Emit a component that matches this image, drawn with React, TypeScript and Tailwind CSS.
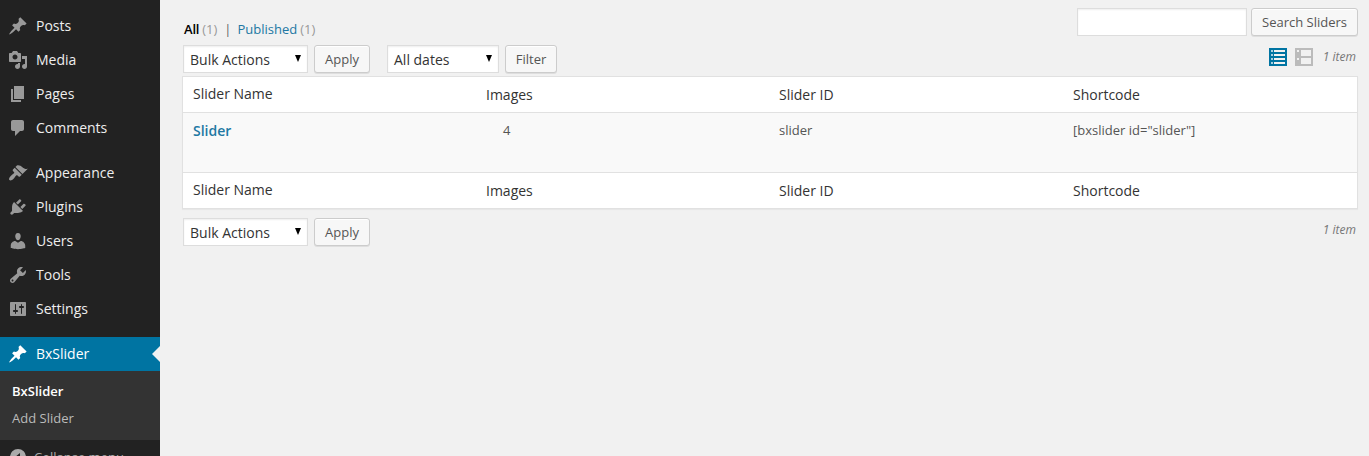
import React from "react";

const icons = {
  pin: "M10.44 3.02l1.82-1.82 6.36 6.35-1.83 1.82c-1.05-.68-2.48-.57-3.41.36l-.75.75c-.92.93-1.04 2.35-.35 3.41l-1.83 1.82-2.41-2.41-2.8 2.79c-.42.42-3.38 2.71-3.8 2.29s1.86-3.39 2.28-3.81l2.79-2.79L4.1 9.36l1.83-1.82c1.05.69 2.48.57 3.4-.36l.75-.75c.93-.92 1.05-2.35.36-3.41z",
  media: "M13 11V4c0-.55-.45-1-1-1h-1.67L9 1H5L3.67 3H2c-.55 0-1 .45-1 1v7c0 .55.45 1 1 1h10c.55 0 1-.45 1-1zM7 4.5c1.38 0 2.5 1.12 2.5 2.5S8.38 9.5 7 9.5 4.5 8.38 4.5 7 5.62 4.5 7 4.5zM14 6h5v10.5c0 1.38-1.12 2.5-2.5 2.5S14 17.88 14 16.5s1.12-2.5 2.5-2.5c.17 0 .34.02.5.05V9h-3V6zm-4 8.05V13h2v3.5c0 1.38-1.12 2.5-2.5 2.5S7 17.88 7 16.5 8.12 14 9.5 14c.17 0 .34.02.5.05z",
  page: "M6 15V2h10v13H6zm-1 1h8v2H3V5h2v11z",
  comment: "M5 2h9c1.1 0 2 .9 2 2v7c0 1.1-.9 2-2 2h-2l-5 5v-5H5c-1.1 0-2-.9-2-2V4c0-1.1.9-2 2-2z",
  brush: "M14.48 11.06L7.41 3.99l1.5-1.5c.5-.56 2.3-.47 3.51.32 1.21.8 1.43 1.28 2.91 2.1 1.18.64 2.45 1.26 4.45.85zm-.71.71L6.7 4.7 4.93 6.47c-.39.39-.39 1.02 0 1.41l1.06 1.06c.39.39.39 1.03 0 1.42-.6.6-1.43 1.11-2.21 1.69-.35.26-.7.53-1.01.84C1.43 14.23.4 16.08 1.4 17.07c.99 1 2.84-.03 4.18-1.36.31-.31.58-.66.85-1.02.57-.78 1.08-1.61 1.69-2.21.39-.39 1.02-.39 1.41 0l1.06 1.06c.39.39 1.02.39 1.41 0z",
  plug: "M13.11 4.36L9.87 7.6 8 5.73l3.24-3.24c.35-.34 1.05-.2 1.56.32.52.51.66 1.21.31 1.55zm-8 1.77l.91-1.12 9.01 9.01-1.19.84c-.71.71-2.63 1.16-3.82 1.16H6.14L4.9 17.26c-.59.59-1.54.59-2.12 0-.59-.58-.59-1.53 0-2.12l1.24-1.24v-3.88c0-1.13.4-3.19 1.09-3.89zm7.26 3.97l3.24-3.24c.34-.35 1.04-.21 1.55.31.52.51.66 1.21.31 1.55l-3.24 3.25z",
  user: "M10 9.25c-2.27 0-2.73-3.44-2.73-3.44C7 4.02 7.82 2 9.97 2c2.16 0 2.98 2.02 2.71 3.81 0 0-.41 3.44-2.68 3.44zm0 2.57L12.72 10c2.39 0 4.52 2.33 4.52 4.53v2.49s-3.65 1.13-7.24 1.13c-3.65 0-7.24-1.13-7.24-1.13v-2.49c0-2.25 1.94-4.48 4.47-4.48z",
  wrench: "M16.68 9.77c-1.34 1.34-3.3 1.67-4.95.99l-5.41 6.52c-.99.99-2.59.99-3.58 0s-.99-2.59 0-3.57l6.52-5.42c-.68-1.65-.35-3.61.99-4.95 1.28-1.28 3.12-1.62 4.72-1.06l-2.89 2.89 2.82 2.82 2.86-2.87c.53 1.58.18 3.39-1.08 4.65zM3.81 16.21c.4.39 1.04.39 1.43 0 .4-.4.4-1.04 0-1.43-.39-.4-1.03-.4-1.43 0-.39.39-.39 1.03 0 1.43z",
  sliders: "M18 16V4c0-.55-.45-1-1-1H3c-.55 0-1 .45-1 1v12c0 .55.45 1 1 1h14c.55 0 1-.45 1-1zM8 11h1c.55 0 1 .45 1 1s-.45 1-1 1H8v1.5c0 .28-.22.5-.5.5s-.5-.22-.5-.5V13H6c-.55 0-1-.45-1-1s.45-1 1-1h1V5.5c0-.28.22-.5.5-.5s.5.22.5.5V11zm5-2h-1c-.55 0-1-.45-1-1s.45-1 1-1h1V5.5c0-.28.22-.5.5-.5s.5.22.5.5V7h1c.55 0 1 .45 1 1s-.45 1-1 1h-1v5.5c0 .28-.22.5-.5.5s-.5-.22-.5-.5V9z",
};

type IconName = keyof typeof icons;

function MenuItem({ icon, label, active = false }: { icon: IconName; label: string; active?: boolean }) {
  return (
    <li className={`relative flex h-[34px] items-center pl-2 text-sm ${active ? "bg-[#0074a2] text-white" : "text-[#eee]"}`}>
      <svg viewBox="0 0 20 20" className={`mr-2 size-5 ${active ? "fill-white" : "fill-[#999]"}`}>
        <path fillRule="evenodd" d={icons[icon]} />
      </svg>
      <span>{label}</span>
      {active && <span className="absolute top-[9px] right-0 border-y-8 border-r-8 border-y-transparent border-r-[#f1f1f1]" />}
    </li>
  );
}

function Sidebar() {
  return (
    <nav className="h-full w-40 shrink-0 overflow-hidden bg-[#222] pt-[9px]">
      <ul>
        <MenuItem icon="pin" label="Posts" />
        <MenuItem icon="media" label="Media" />
        <MenuItem icon="page" label="Pages" />
        <MenuItem icon="comment" label="Comments" />
      </ul>
      <ul className="mt-[11px]">
        <MenuItem icon="brush" label="Appearance" />
        <MenuItem icon="plug" label="Plugins" />
        <MenuItem icon="user" label="Users" />
        <MenuItem icon="wrench" label="Tools" />
        <MenuItem icon="sliders" label="Settings" />
      </ul>
      <ul className="mt-[11px]">
        <MenuItem icon="pin" label="BxSlider" active />
      </ul>
      <ul className="h-[69px] bg-[#333] pt-[7px] pl-3 text-[13px] leading-[27px]">
        <li className="font-semibold text-white">BxSlider</li>
        <li className="text-[#bbb]">Add Slider</li>
      </ul>
      <div className="flex h-[34px] items-center pl-2 text-[13px] text-[#aaa]">
        <svg viewBox="0 0 20 20" className="mr-1.5 size-5 fill-[#aaa]">
          <path fillRule="evenodd" d="M10 2a8 8 0 1 1 0 16 8 8 0 0 1 0-16zm2 4-5 4 5 4z" />
        </svg>
        <span className="pt-0.5">Collapse menu</span>
      </div>
    </nav>
  );
}

function SelectBox({ label, className }: { label: string; className: string }) {
  return (
    <div className={`flex h-7 items-center justify-between border border-[#ddd] bg-white pr-1.5 pl-1.5 text-sm text-[#333] shadow-[inset_0_1px_2px_rgba(0,0,0,0.07)] ${className}`}>
      <span className="pt-0.5">{label}</span>
      <svg viewBox="0 0 6 7" className="mb-px h-[7px] w-1.5 fill-black">
        <path d="M0 0h6L3 7z" />
      </svg>
    </div>
  );
}

function Button({ label, className }: { label: string; className: string }) {
  return (
    <button className={`flex h-7 items-center justify-center rounded-[3px] border border-[#ccc] bg-[#f7f7f7] pt-0.5 text-[13px] text-[#555] shadow-[inset_0_1px_0_#fff,0_1px_0_rgba(0,0,0,0.08)] ${className}`}>
      {label}
    </button>
  );
}

function HeadingRow() {
  return (
    <div className="grid h-[35px] grid-cols-[293px_293px_294px_1fr] pt-[7px] pl-2.5 text-sm leading-[19px] text-[#333]">
      <span>Slider Name</span>
      <span className="pt-px">Images</span>
      <span className="pt-px">Slider ID</span>
      <span className="pt-px">Shortcode</span>
    </div>
  );
}

export default function App() {
  return (
    <div className="flex h-[456px] w-[1369px] overflow-hidden bg-[#f1f1f1] font-['Open_Sans',sans-serif]">
      <Sidebar />
      <main className="min-w-0 flex-1 pt-2 pr-[11px] pl-[22px] text-[13px] text-[#555]">
        <div className="flex h-[37px] justify-between">
          <div className="flex pt-3 pl-0.5 leading-[18px] text-[#999]">
            <span className="font-semibold tracking-[-0.2px] text-black">All</span>
            <span className="ml-[3px]">(1)</span>
            <span className="ml-[7px] text-[#666]">|</span>
            <span className="ml-[6px] text-[#2178a3]">Published</span>
            <span className="ml-[3px]">(1)</span>
          </div>
          <div className="flex gap-1">
            <input aria-label="Search" className="h-7 w-[170px] border border-[#ddd] bg-white shadow-[inset_0_1px_2px_rgba(0,0,0,0.07)] outline-none" />
            <Button label="Search Sliders" className="w-[107px]" />
          </div>
        </div>
        <div className="flex h-[31px] pl-px">
          <SelectBox label="Bulk Actions" className="w-[125px]" />
          <Button label="Apply" className="ml-1.5 w-14" />
          <SelectBox label="All dates" className="ml-[17px] w-[112px]" />
          <Button label="Filter" className="ml-1.5 w-[52px]" />
          <div className="ml-auto flex h-6 items-center pr-0.5">
            <svg viewBox="0 0 18 18" className="h-[18px] w-[18px] fill-[#0074a2]" shapeRendering="crispEdges">
              <path fillRule="evenodd" d="M0 0h18v18H0zM5 2h11v2H5zM5 6h11v2H5zM5 10h11v2H5zM5 14h11v2H5z" />
              <path className="fill-[#a9d0e0]" d="M2 2h2v2H2zM2 6h2v2H2zM2 10h2v2H2zM2 14h2v2H2z" />
            </svg>
            <svg viewBox="0 0 18 18" className="ml-2 h-[18px] w-[18px] fill-[#bbb]" shapeRendering="crispEdges">
              <path fillRule="evenodd" d="M0 0h18v18H0zM2 2h2v2H2zM6 2h10v6H6zM2 10h2v2H2zM6 10h10v6H6z" />
            </svg>
            <span className="ml-2.5 text-xs text-[#777] italic">1 item</span>
          </div>
        </div>
        <section className="h-[133px] border border-[#e1e1e1] bg-white shadow-[0_1px_1px_rgba(0,0,0,0.04)]">
          <HeadingRow />
          <div className="grid h-[61px] grid-cols-[293px_293px_294px_1fr] border-y border-[#e1e1e1] bg-[#f9f9f9] pt-2 pl-2.5 leading-[18px]">
            <span className="text-sm leading-5 font-semibold text-[#2178a3]">Slider</span>
            <span className="pl-[17px]">4</span>
            <span>slider</span>
            <span>[bxslider id="slider"]</span>
          </div>
          <HeadingRow />
        </section>
        <div className="flex pt-[9px] pl-px">
          <SelectBox label="Bulk Actions" className="w-[125px]" />
          <Button label="Apply" className="ml-1.5 w-14" />
          <span className="ml-auto flex h-6 items-center pr-0.5 text-xs text-[#777] italic">1 item</span>
        </div>
      </main>
    </div>
  );
}
